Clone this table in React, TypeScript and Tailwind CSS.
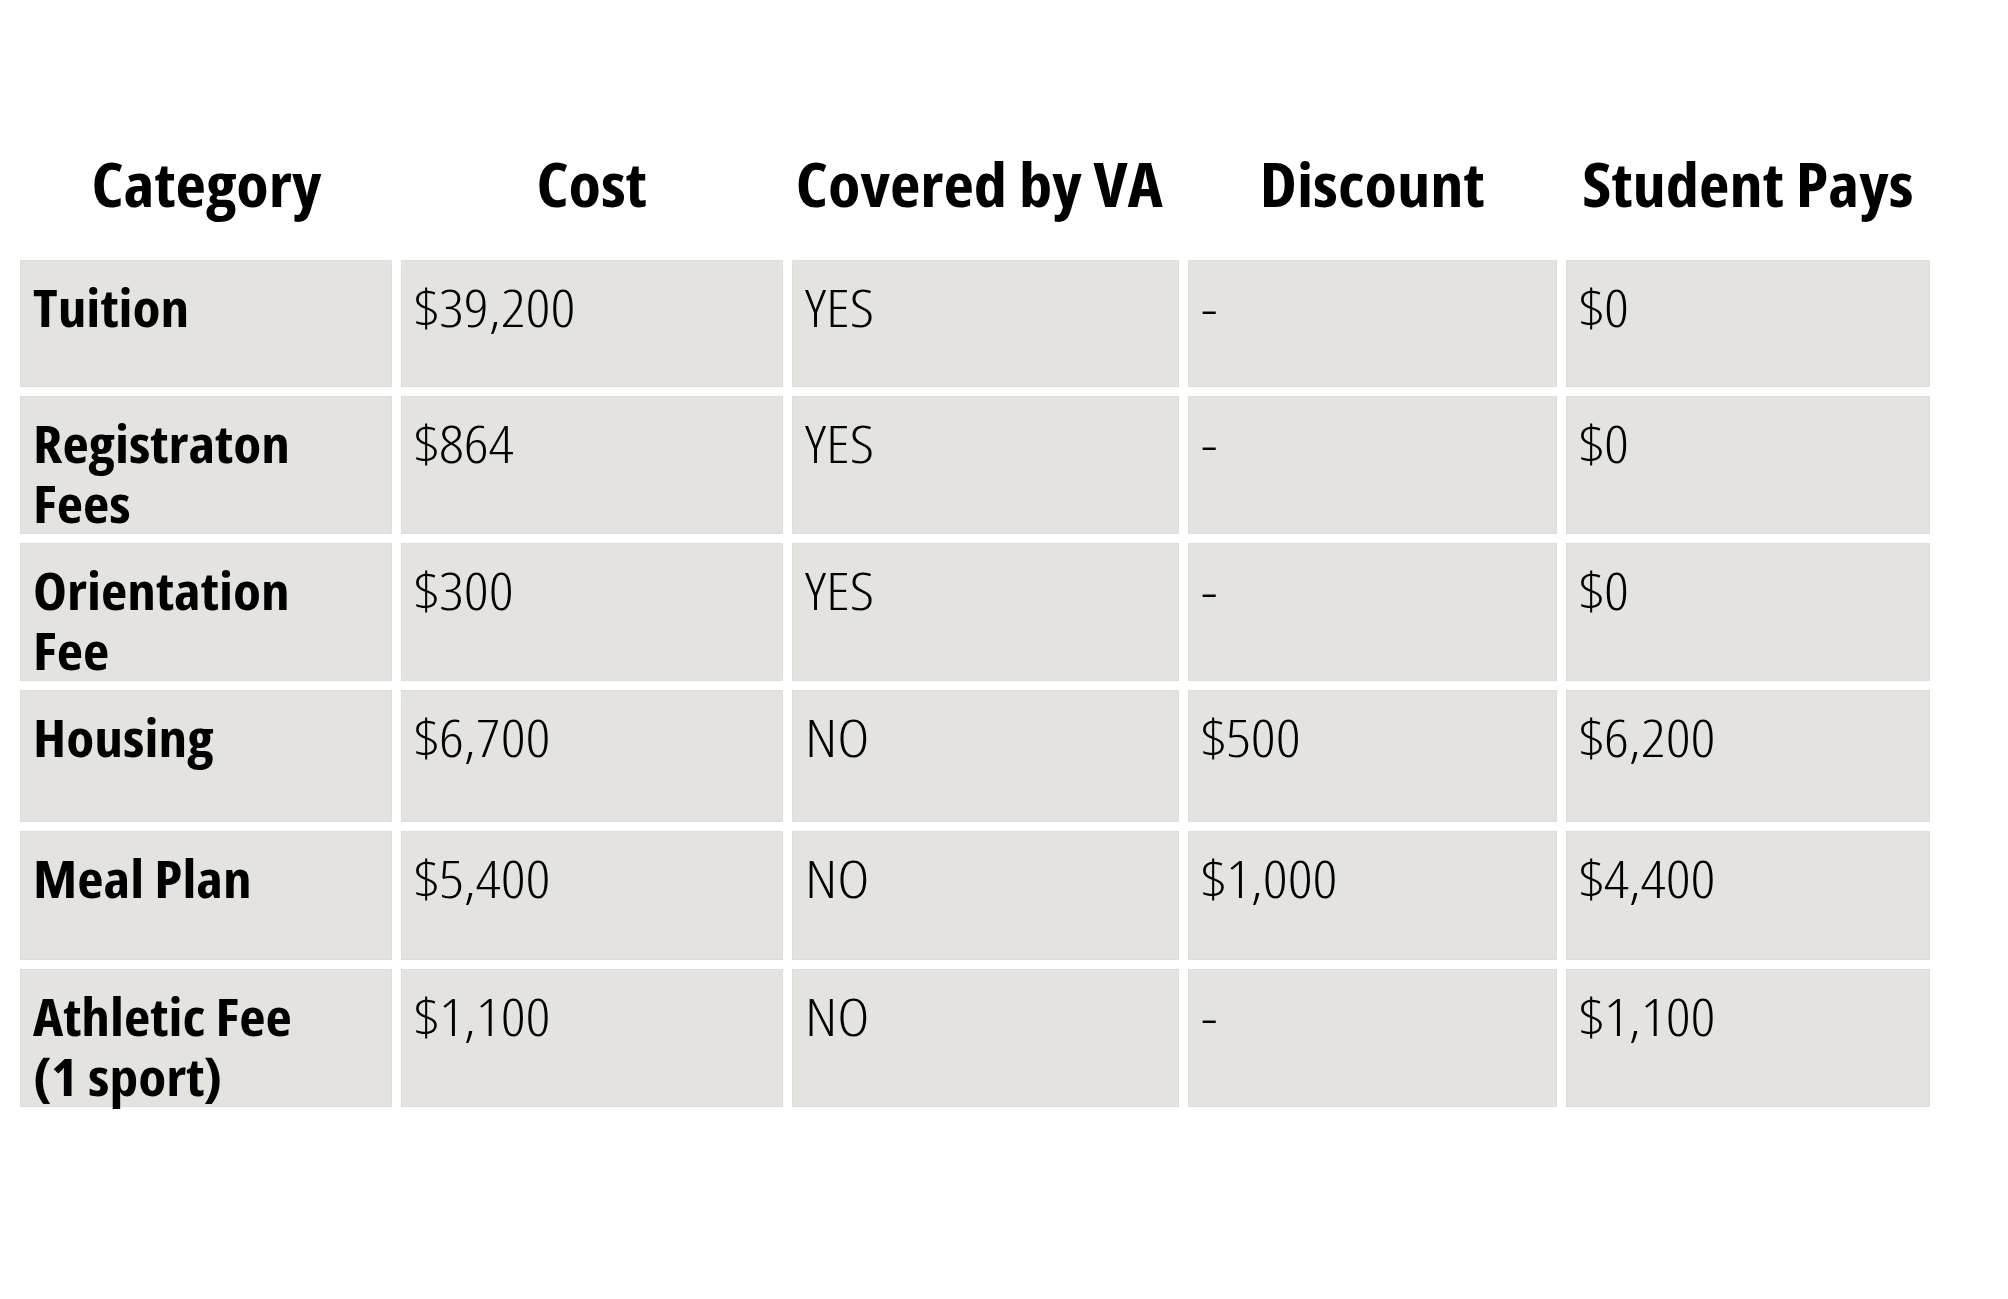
import { Fragment } from "react";

const columns = ["Category", "Cost", "Covered by VA", "Discount", "Student Pays"];

type Row = {
  category: string[];
  cost: string;
  va: string;
  discount: string;
  pays: string;
  height: string;
};

// category lines are split by hand, same as the source table
const rows: Row[] = [
  { category: ["Tuition"], cost: "$39,200", va: "YES", discount: "-", pays: "$0", height: "h-[127px]" },
  { category: ["Registraton", "Fees"], cost: "$864", va: "YES", discount: "-", pays: "$0", height: "h-[138px]" },
  { category: ["Orientation", "Fee"], cost: "$300", va: "YES", discount: "-", pays: "$0", height: "h-[138px]" },
  { category: ["Housing"], cost: "$6,700", va: "NO", discount: "$500", pays: "$6,200", height: "h-[132px]" },
  { category: ["Meal Plan"], cost: "$5,400", va: "NO", discount: "$1,000", pays: "$4,400", height: "h-[129px]" },
  { category: ["Athletic Fee", "(1 sport)"], cost: "$1,100", va: "NO", discount: "-", pays: "$1,100", height: "h-[138px]" },
];

const headCls = ["w-[372px]", "w-[382px]", "w-[387px] pr-[13px]", "w-[369px]", "w-[364px]"];

const cellBase =
  "align-top bg-[#e4e3df] border border-dotted border-[#d8d7d2] pl-[12px] pr-[14px] pt-[16px] text-[51px] leading-[60px] text-black whitespace-nowrap";

function Value({ text }: { text: string }) {
  return <span className="inline-block origin-left scale-x-[1.2] font-light">{text}</span>;
}

export default function App() {
  return (
    <div className="min-h-screen bg-white pt-[130px] pl-[11px] font-['Open_Sans',sans-serif] [font-stretch:75%]">
      <table className="border-separate border-spacing-[9px] table-fixed">
        <thead>
          <tr>
            {columns.map((col, i) => (
              <th
                key={col}
                className={`${headCls[i]} h-[112px] align-bottom pb-[31px] text-center text-[61px] leading-[73px] font-bold text-black whitespace-nowrap`}
              >
                <span className="inline-block origin-center scale-x-[1.09]">{col}</span>
              </th>
            ))}
          </tr>
        </thead>
        <tbody>
          {rows.map((row) => (
            <tr key={row.category.join(" ")}>
              <td className={`${cellBase} ${row.height} font-bold`}>
                <span className="inline-block origin-left scale-x-[1.125]">
                  {row.category.map((line, i) => (
                    <Fragment key={line}>
                      {i > 0 && <br />}
                      {line}
                    </Fragment>
                  ))}
                </span>
              </td>
              <td className={cellBase}>
                <Value text={row.cost} />
              </td>
              <td className={cellBase}>
                <Value text={row.va} />
              </td>
              <td className={cellBase}>
                <Value text={row.discount} />
              </td>
              <td className={cellBase}>
                <Value text={row.pays} />
              </td>
            </tr>
          ))}
        </tbody>
      </table>
    </div>
  );
}
